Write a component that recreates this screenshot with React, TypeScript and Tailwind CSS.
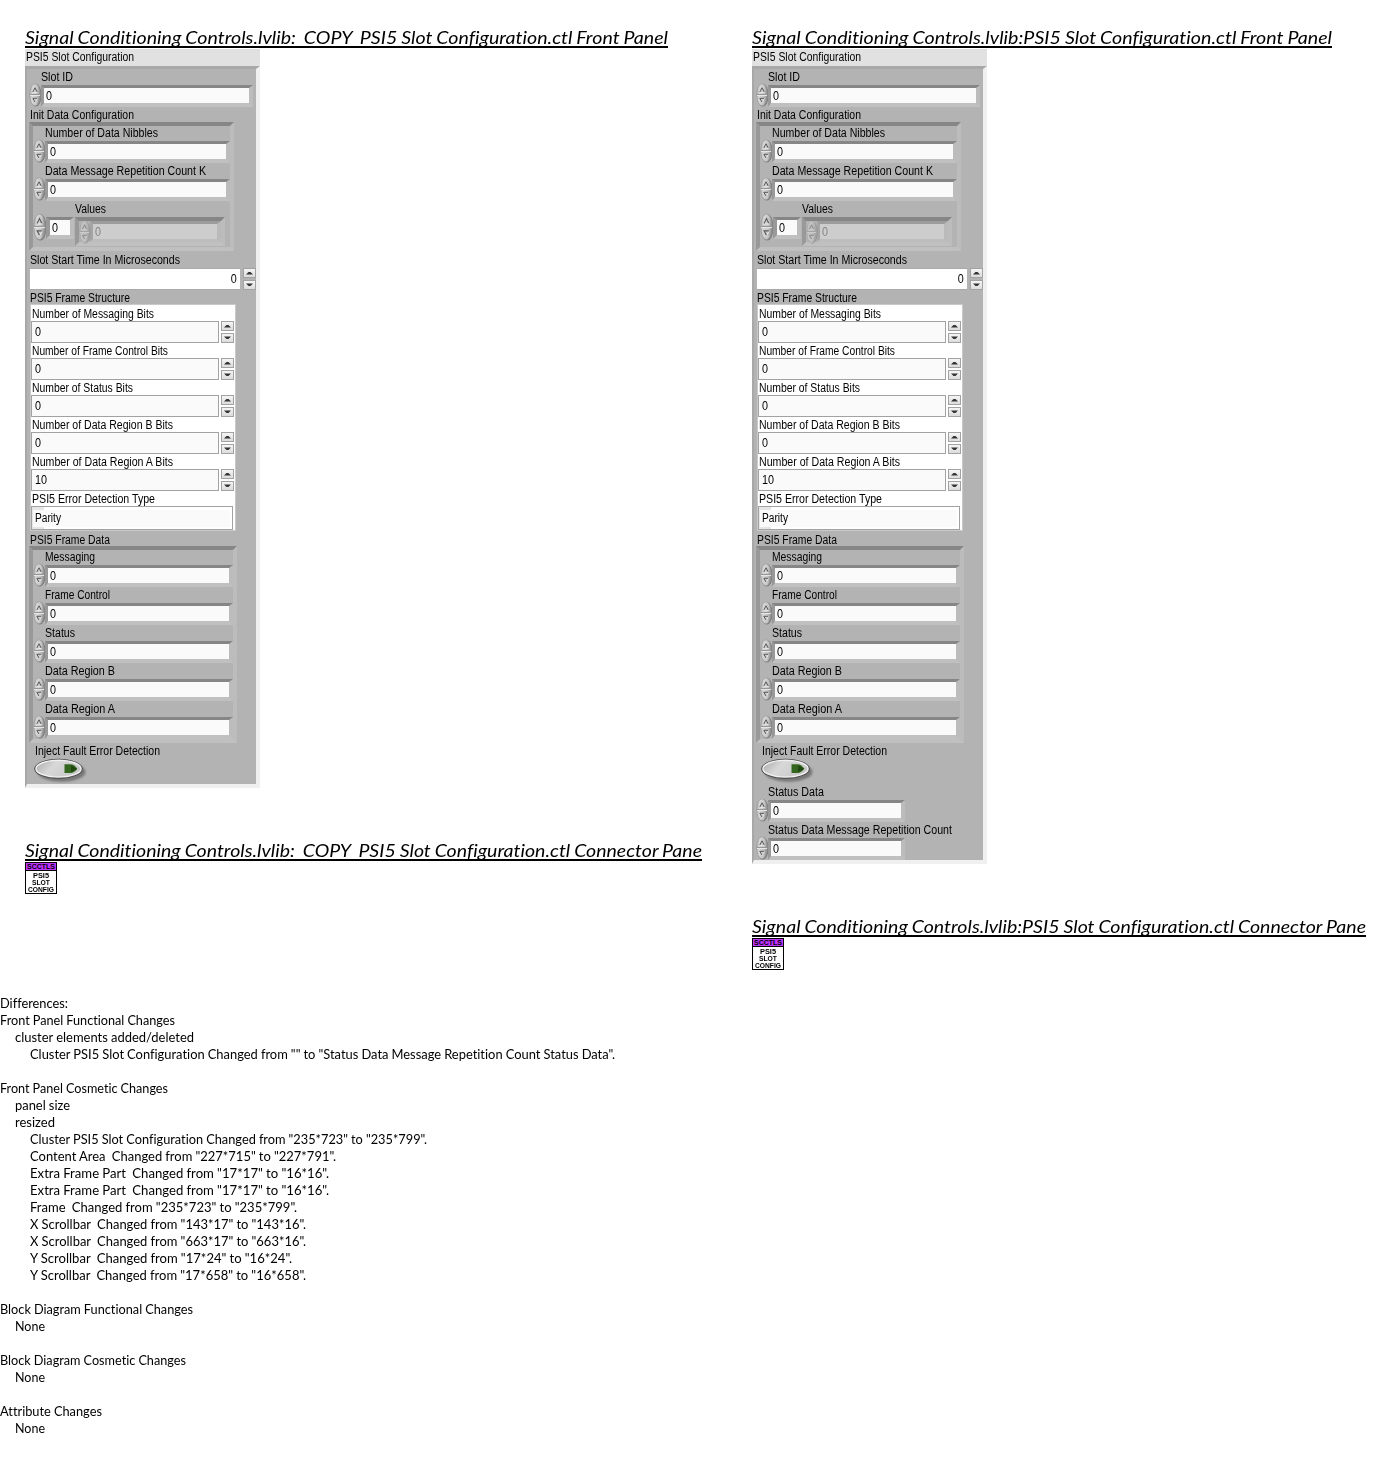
import { useLayoutEffect, useRef, type ReactNode } from "react";

/** Single line of text condensed or widened to an exact width. */
function Fit({ w, children, right }: { w: number; children: string; right?: boolean }) {
  const ref = useRef<HTMLSpanElement>(null);
  useLayoutEffect(() => {
    const el = ref.current;
    if (!el) return;
    el.style.transform = "none";
    const natural = el.getBoundingClientRect().width;
    if (natural > 0) el.style.transform = `scaleX(${w / natural})`;
  }, [w]);
  return (
    <span ref={ref} className={right ? "inline-block origin-right whitespace-pre" : "inline-block origin-left whitespace-pre"}>
      {children}
    </span>
  );
}

function Title({ w, children }: { w: number; children: string }) {
  return (
    <div className="h-[21px] overflow-hidden border-b-2 border-black font-['Lato'] text-[18px] leading-[20px] [word-spacing:-0.6px] italic [font-variant-ligatures:none]" style={{ width: w }}>
      <Fit w={w}>{children}</Fit>
    </div>
  );
}

function Label({ w, className, children }: { w: number; className: string; children: string }) {
  return (
    <div className={`flex items-center ${className}`}>
      <Fit w={w}>{children}</Fit>
    </div>
  );
}

function Knob({ className = "h-6 w-[13px]" }: { className?: string }) {
  return (
    <svg viewBox="0 0 13 24" preserveAspectRatio="none" className={`shrink-0 ${className}`}>
      <defs>
        <linearGradient id="knob" x1="0" y1="0" x2="1" y2="0.15">
          <stop offset="0" stopColor="#a0a0a0" />
          <stop offset="0.3" stopColor="#d8d8d8" />
          <stop offset="0.75" stopColor="#c4c4c4" />
          <stop offset="1" stopColor="#909090" />
        </linearGradient>
      </defs>
      <ellipse cx="6.8" cy="12.3" rx="5.8" ry="11.3" fill="#7c7c7c" />
      <ellipse cx="6" cy="11.8" rx="5.3" ry="11" fill="url(#knob)" stroke="#989898" strokeWidth="0.6" />
      <path d="M1 11.5H11" stroke="#969696" />
      <path d="M1 12.5H11" stroke="#e6e6e6" />
      <path d="M3.8 9L6 4.8L8.2 9" fill="none" stroke="#585858" />
      <path d="M4.4 9.4H8.6" fill="none" stroke="#efefef" strokeWidth="0.8" />
      <path d="M8.4 15.5L6 19.6" fill="none" stroke="#efefef" strokeWidth="0.8" />
      <path d="M8.2 15.3H3.8L6 19" fill="none" stroke="#585858" />
    </svg>
  );
}

const bevel = "border-t-[#868686] border-l-[#999] border-r-[#bcbcbc] border-b-[#c0c0c0]";

/** Classic 3D numeric control: an oval knob followed by a sunken field. */
function Numeric({ className }: { className: string }) {
  return (
    <div className="flex h-[22px] items-center">
      <Knob className="-mt-0.5 h-6 w-[13px]" />
      <div className={`-ml-px flex h-[22px] items-center border-t-[3px] border-r-4 border-b-4 border-l-[3px] ${bevel} bg-[#fafafa] pl-0.5 ${className}`}>
        <Fit w={6}>0</Fit>
      </div>
    </div>
  );
}

function StepButton({ down }: { down?: boolean }) {
  return (
    <div className="flex h-2.5 w-[13px] items-center justify-center border border-[#a2a2a2] bg-linear-to-b from-[#f5f5f5] to-[#dcdcdc]">
      <svg viewBox="0 0 7 4" className="h-1 w-[7px]">
        <path d={down ? "M0 0.5H7L4.5 3H2.5Z" : "M0 3.5H7L4.5 1H2.5Z"} fill="#333" />
      </svg>
    </div>
  );
}

function Steps() {
  return (
    <div className="flex h-[22px] flex-col justify-between">
      <StepButton />
      <StepButton down />
    </div>
  );
}

function Cluster({ className, children }: { className: string; children: ReactNode }) {
  return <div className={`ml-0.5 border-4 ${bevel} ${className}`}>{children}</div>;
}

function InitData() {
  return (
    <Cluster className="h-[129px] w-[205px]">
      <Label w={113} className="h-[15px] pb-px pl-3">Number of Data Nibbles</Label>
      <Numeric className="w-[186px]" />
      <Label w={161} className="h-4 pl-3">Data Message Repetition Count K</Label>
      <Numeric className="w-[186px]" />
      <Label w={31} className="h-4 pl-[42px]">Values</Label>
      <div className="flex">
        <Knob className="-mt-1 h-7 w-3.5" />
        <div className={`-ml-px flex h-[22px] w-7 shrink-0 items-center border-t-[3px] border-r-4 border-b-4 border-l-4 ${bevel} bg-[#fafafa] pl-0.5`}>
          <Fit w={6}>0</Fit>
        </div>
        <div className={`ml-px flex h-[29px] w-[150px] shrink-0 border-4 ${bevel}`}>
          <Knob className="-mt-px h-6 w-3 opacity-50" />
          <div className="-ml-px flex h-[21px] w-[131px] items-center border-t-[3px] border-r-4 border-b-[3px] border-l-[3px] border-t-[#9c9c9c] border-r-[#bababa] border-b-[#bdbdbd] border-l-[#a5a5a5] bg-[#cdcdcd] pl-0.5 text-[#858585]">
            <Fit w={6}>0</Fit>
          </div>
        </div>
      </div>
    </Cluster>
  );
}

const frameFields = [
  { name: "Number of Messaging Bits", w: 122, value: "0" },
  { name: "Number of Frame Control Bits", w: 136, value: "0" },
  { name: "Number of Status Bits", w: 101, value: "0" },
  { name: "Number of Data Region B Bits", w: 141, value: "0" },
  { name: "Number of Data Region A Bits", w: 141, value: "10" },
];

function FrameStructure() {
  return (
    <div className="ml-[3px] h-[227px] w-[206px] border border-[#c9c9c9] bg-white pt-px">
      {frameFields.map((f) => (
        <div key={f.name} className="h-[37px]">
          <Label w={f.w} className="h-[15px] pt-px pl-px">{f.name}</Label>
          <div className="flex gap-0.5">
            <div className="flex h-[22px] w-[188px] items-center border border-[#a2a2a2] bg-[#fafafa] pl-[3px]">
              <Fit w={f.value.length * 6}>{f.value}</Fit>
            </div>
            <Steps />
          </div>
        </div>
      ))}
      <Label w={123} className="h-[15px] pt-px pl-px">PSI5 Error Detection Type</Label>
      <div className="flex h-6 w-[202px] items-center border border-[#a2a2a2] bg-[linear-gradient(90deg,#e6e6e6_12px,#fff_12px)] pl-px">
        <div className="flex h-[17px] w-[197px] items-center bg-[#fafafa] pl-0.5">
          <Fit w={26}>Parity</Fit>
        </div>
      </div>
    </div>
  );
}

const dataFields = [
  { name: "Messaging", w: 50 },
  { name: "Frame Control", w: 65 },
  { name: "Status", w: 30 },
  { name: "Data Region B", w: 70 },
  { name: "Data Region A", w: 70 },
];

function FrameData() {
  return (
    <Cluster className="h-[197px] w-[208px]">
      {dataFields.map((f, i) => (
        <div key={f.name}>
          <Label w={f.w} className={i === 0 ? "h-[15px] pb-px pl-3" : "h-4 pl-3"}>{f.name}</Label>
          <Numeric className="w-[188px]" />
        </div>
      ))}
    </Cluster>
  );
}

function FaultSwitch() {
  return (
    <svg viewBox="0 0 54 27" className="ml-[7px] h-[27px] w-[54px]">
      <defs>
        <linearGradient id="face" x1="0" y1="0" x2="1" y2="0.35">
          <stop offset="0" stopColor="#aaa" />
          <stop offset="0.45" stopColor="#d8d8d8" />
          <stop offset="1" stopColor="#c8c8c8" />
        </linearGradient>
        <filter id="soft" x="-10%" y="-20%" width="120%" height="140%">
          <feGaussianBlur stdDeviation="1" />
        </filter>
      </defs>
      <ellipse cx="27.5" cy="14" rx="24" ry="9.7" fill="#777" filter="url(#soft)" />
      <ellipse cx="24.5" cy="10.8" rx="24.3" ry="10" fill="#484848" />
      <ellipse cx="24.5" cy="10.7" rx="22.6" ry="8.4" fill="url(#face)" stroke="#f1f1f1" strokeWidth="1.4" />
      <path d="M30.5 6.3H36C39.5 6.3 41.5 8.3 43.3 10.8C41.5 13.3 39.5 15 36 15H30.5Z" fill="#35661f" />
      <path d="M37 7.3L43 10.8L37 14.3Z" fill="#1f470f" />
    </svg>
  );
}

function FrontPanel({ extended }: { extended?: boolean }) {
  return (
    <div className="mt-px w-[235px] font-['Liberation_Sans'] text-[12px] leading-[14px]">
      <Label w={108} className="h-[17px] bg-[#e1e1e1] pb-px pl-px">PSI5 Slot Configuration</Label>
      <div
        className={`border-t-[3px] border-r-4 border-b-4 border-l-2 border-t-[#a8a8a8] border-r-[#f0f0f0] border-b-[#f0f0f0] border-l-[#a8a8a8] bg-[#b3b3b3] ${
          extended ? "h-[798px]" : "h-[722px]"
        }`}
      >
        <Label w={32} className="h-4 pl-3.5">Slot ID</Label>
        <div className="pl-0.5">
          <Numeric className="w-[212px]" />
        </div>
        <Label w={104} className="h-[15px] pl-[3px]">Init Data Configuration</Label>
        <InitData />
        <Label w={150} className="h-[17px] pl-[3px]">Slot Start Time In Microseconds</Label>
        <div className="flex gap-[3px] pl-[3px]">
          <div className="flex h-[22px] w-[210px] items-center justify-end border-t border-b border-[#a9a9a9] bg-white pr-[3px]">
            <Fit w={6} right>0</Fit>
          </div>
          <Steps />
        </div>
        <Label w={100} className="h-3.5 pt-0.5 pl-[3px]">PSI5 Frame Structure</Label>
        <FrameStructure />
        <Label w={80} className="h-[15px] pt-0.5 pl-[3px]">PSI5 Frame Data</Label>
        <FrameData />
        <Label w={125} className="h-[15px] pt-px pl-2">Inject Fault Error Detection</Label>
        <FaultSwitch />
        {extended && (
          <div className="pl-0.5">
            <Label w={56} className="h-[15px] pb-px pl-3">Status Data</Label>
            <Numeric className="w-[137px]" />
            <Label w={184} className="h-4 pl-3">Status Data Message Repetition Count</Label>
            <Numeric className="w-[137px]" />
          </div>
        )}
      </div>
    </div>
  );
}

function ConnectorIcon() {
  return (
    <div className="mt-px h-8 w-8 border border-black bg-white font-['Liberation_Sans'] text-[7px] leading-[7px] font-bold">
      <div className="flex h-2 items-center border-b border-black bg-[#bf33ff] pl-px">
        <Fit w={28}>SCCTLS</Fit>
      </div>
      <div className="pt-px">
        <div className="flex h-[7px] pl-[7px]"><Fit w={16}>PSI5</Fit></div>
        <div className="flex h-[7px] pl-1.5"><Fit w={18}>SLOT</Fit></div>
        <div className="flex h-[7px] pl-0.5"><Fit w={26}>CONFIG</Fit></div>
      </div>
    </div>
  );
}

const pads = ["", "pl-[15px]", "pl-[30px]"];

const report: [number, number, string][] = [
  [0, 68, "Differences:"],
  [0, 175, "Front Panel Functional Changes"],
  [1, 179, "cluster elements added/deleted"],
  [2, 585, 'Cluster PSI5 Slot Configuration Changed from "" to "Status Data Message Repetition Count Status Data".'],
  [0, 0, ""],
  [0, 168, "Front Panel Cosmetic Changes"],
  [1, 55, "panel size"],
  [1, 40, "resized"],
  [2, 397, 'Cluster PSI5 Slot Configuration Changed from "235*723" to "235*799".'],
  [2, 306, 'Content Area  Changed from "227*715" to "227*791".'],
  [2, 299, 'Extra Frame Part  Changed from "17*17" to "16*16".'],
  [2, 299, 'Extra Frame Part  Changed from "17*17" to "16*16".'],
  [2, 267, 'Frame  Changed from "235*723" to "235*799".'],
  [2, 276, 'X Scrollbar  Changed from "143*17" to "143*16".'],
  [2, 276, 'X Scrollbar  Changed from "663*17" to "663*16".'],
  [2, 262, 'Y Scrollbar  Changed from "17*24" to "16*24".'],
  [2, 276, 'Y Scrollbar  Changed from "17*658" to "16*658".'],
  [0, 0, ""],
  [0, 193, "Block Diagram Functional Changes"],
  [1, 30, "None"],
  [0, 0, ""],
  [0, 186, "Block Diagram Cosmetic Changes"],
  [1, 30, "None"],
  [0, 0, ""],
  [0, 102, "Attribute Changes"],
  [1, 30, "None"],
];

export default function App() {
  return (
    <div className="h-[1471px] w-[1391px] overflow-hidden bg-white text-black">
      <div className="flex h-[995px] pt-[27px] pl-[25px]">
        <div className="w-[727px] shrink-0">
          <Title w={643}>Signal Conditioning Controls.lvlib:  COPY  PSI5 Slot Configuration.ctl Front Panel</Title>
          <FrontPanel />
          <div className="h-[52px]" />
          <Title w={677}>Signal Conditioning Controls.lvlib:  COPY  PSI5 Slot Configuration.ctl Connector Pane</Title>
          <ConnectorIcon />
        </div>
        <div className="shrink-0">
          <Title w={580}>Signal Conditioning Controls.lvlib:PSI5 Slot Configuration.ctl Front Panel</Title>
          <FrontPanel extended />
          <div className="h-[52px]" />
          <Title w={614}>Signal Conditioning Controls.lvlib:PSI5 Slot Configuration.ctl Connector Pane</Title>
          <ConnectorIcon />
        </div>
      </div>
      <div className="font-['Lato'] text-[13px] leading-[17px] [word-spacing:-0.2px] [font-variant-ligatures:none]">
        {report.map(([level, w, text], i) => (
          <div key={i} className={`h-[17px] ${pads[level]}`}>
            {text && <Fit w={w}>{text}</Fit>}
          </div>
        ))}
      </div>
    </div>
  );
}
